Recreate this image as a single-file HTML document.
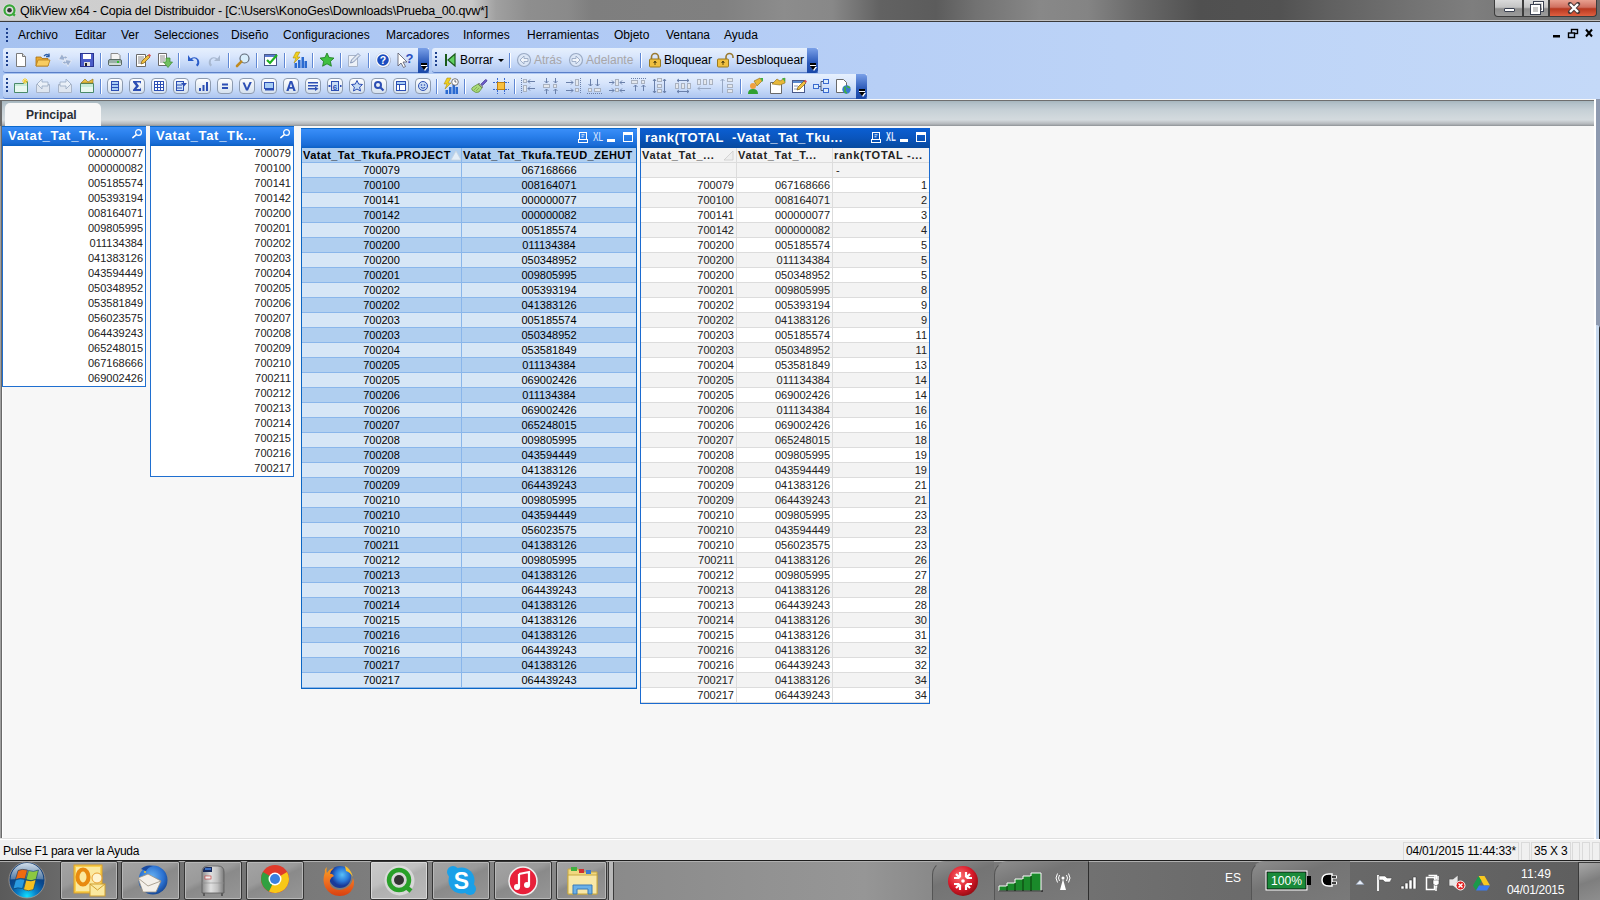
<!DOCTYPE html>
<html><head><meta charset="utf-8"><style>
*{margin:0;padding:0;box-sizing:border-box}
html,body{width:1600px;height:900px;overflow:hidden;background:#f7f7f7;font-family:"Liberation Sans",sans-serif;position:relative}
.abs{position:absolute}
#title{left:0;top:0;width:1600px;height:22px;background:linear-gradient(90deg,#d0d0d0 0%,#c8c8c8 29.5%,#a0a0a0 31%,#8e8e8e 33%,#8a8a8a 35.5%,#7e7e7e 37%,#808080 45%,#8c8c8c 49%,#888888 52%,#626262 55%,#5c5c5c 58.5%,#727272 61%,#888888 65%,#848484 68%,#6a6a6a 71%,#505050 75%,#525252 80%,#606060 83%,#727272 88%,#7e7e7e 92%,#6a6a6a 100%);border-bottom:1px solid #3a3a3a;box-shadow:inset 0 -1px 0 #c0c0c0}
#title .txt{position:absolute;left:20px;top:4px;font-size:12.5px;color:#000;white-space:nowrap;letter-spacing:-0.21px}
.wbtn{position:absolute;top:0;height:17px;border:1px solid #3c3c3c;border-top:none;background:linear-gradient(180deg,#dadada 0%,#c4c4c4 45%,#8e8e8e 55%,#9c9c9c 100%)}
.wbtn:first-of-type{border-radius:0 0 0 4px}
.wbtn.close{border-radius:0 0 4px 0;background:linear-gradient(180deg,#e8a090 0%,#d07060 45%,#b83820 55%,#e06040 100%)}
#menubar{left:0;top:22px;width:1600px;height:77px;background:linear-gradient(90deg,#a6c2f0 0%,#b2cbf5 40%,#bcd3f7 70%,#c4d9f8 100%)}
.menu{position:absolute;top:28px;font-size:12px;color:#000;white-space:nowrap;line-height:15px}
.tb{position:absolute;height:25px;border-radius:3px 0 0 3px;background:linear-gradient(180deg,#e6f0fd 0%,#d9e6fc 35%,#c6d9f8 65%,#aec6f0 100%);border-bottom:1px solid #5a7fc8}
.tb .grip{left:3px;top:4px;height:15px}
.grip{position:absolute;width:2px;height:13px;background:repeating-linear-gradient(180deg,#1c3f8c 0 2px,transparent 2px 4px)}
.ovf{position:absolute;right:0;top:0;width:11px;height:25px;background:linear-gradient(180deg,#7aa0e8,#2a58b8 60%,#1a48a8);border-radius:0 3px 3px 0}
.ovf:before{content:"";position:absolute;left:3px;top:15px;width:6px;height:2px;background:#000;box-shadow:0 1px 0 #fff}
.ovf:after{content:"";position:absolute;left:2.5px;top:18px;width:0;height:0;border-left:3.5px solid transparent;border-right:3.5px solid transparent;border-top:4px solid #000;filter:drop-shadow(1px 1px 0 #fff)}
.sep{position:absolute;width:2px;height:15px;border-left:1px solid #6088d4;border-right:1px solid #fff}
.ic{position:absolute;overflow:visible}
.tbt{position:absolute;top:53px;font-size:12px;line-height:15px;color:#000;white-space:nowrap}
.tbt.dis{color:#a8a6a8}
#tabstrip{left:0;top:100px;width:1594px;height:26px;border-left:2px solid #6a6a6a;background:linear-gradient(180deg,#6e6e6e 0px,#6e6e6e 1px,#a6b6be 1px,#b4c2ca 4px,#c6d0d6 10px,#d0d8dc 17px,#d4dade 20px,#b4b8bc 24px,#8e9296 26px)}
#rstrip{left:1594px;top:99px;width:6px;height:740px;background:linear-gradient(90deg,#fff 0 2px,#8e9ab0 2px)}
#rstrip2{left:1596px;top:325px;width:4px;height:514px;background:linear-gradient(90deg,#c6d8ee 0 3px,#2a2a2a 3px);border-top-right-radius:4px}
#tab{left:5px;top:103px;width:96px;height:23px;background:#f7f7f7;border-radius:5px 5px 0 0;font-size:12px;font-weight:bold;color:#2a2e36;line-height:25px;padding-left:21px}
#ws{left:0;top:126px;width:1595px;height:713px;background:#f7f7f7;background-image:linear-gradient(90deg,#a0a0a0 0 1px,#6a6a6a 1px 2px,#fff 2px 3px,transparent 3px);border-right:1px solid #e0e0e0;box-shadow:inset 0 -1px 0 #e0e0e0}
#status{left:0;top:839px;width:1600px;height:21px;background:#f0f0f0;border-top:1px solid #fff}
#status .txt{position:absolute;left:3px;top:4px;font-size:12px;color:#000;letter-spacing:-0.3px}
.pane{position:absolute;top:2px;height:18px;border:1px solid #dadada;border-bottom:none;font-size:12px;line-height:17px;color:#000;padding-left:2px;white-space:nowrap;letter-spacing:-0.2px}
#taskbar{left:0;top:860px;width:1600px;height:40px;background:linear-gradient(180deg,#5c5c5c 0%,#4a4a4a 50%,#3e3e3e 100%);border-top:1px solid #2a2a2a}
.lb{position:absolute;background:#fff;border:1px solid #1f6fd0;border-top:none}
.lbh{position:absolute;left:-1px;top:0;right:-1px;height:20px;background:linear-gradient(180deg,#0b68cc 0,#0b68cc 1px,#3a8ef8 1px,#2a80ec 40%,#1a6cd6 85%,#0b60c4 100%);color:#fff;font-weight:bold;font-size:13px;padding-left:6px;line-height:19px;white-space:nowrap;letter-spacing:0.7px}
.mag{position:absolute;right:3px;top:2px}
.lbi{position:absolute;right:2px;font-size:11px;color:#222;line-height:15px}
.t3{position:absolute;left:301px;top:128px;width:336px;height:561px;border:1px solid #0b66c4;background:#d6e6f6}
.t3t{position:absolute;left:-1px;top:-1px;right:-1px;height:20px;background:linear-gradient(180deg,#0b68cc 0,#0b68cc 1px,#3a8ef8 1px,#2a80ec 40%,#1a6cd6 85%,#0b60c4 100%)}
.tico{position:absolute;right:3px;top:2px}
.t3h{position:absolute;left:0;top:19px;width:334px;height:15px;background:#b0cff0;font-weight:bold;font-size:11px;color:#000;line-height:15px;border-bottom:1px solid #8ab6ea;letter-spacing:0.4px}
.sorttri{position:absolute;top:2px}
.t3r{position:absolute;left:0;width:334px;height:15px;font-size:11px;color:#000;line-height:15px;border-bottom:1px solid #8ab6ea}
.t3r.r0{background:#d6e6f6}.t3r.r1{background:#b0cff0}
.t3 .c1{position:absolute;left:0;width:160px;text-align:center;border-right:1px solid #8ab6ea;height:15px}
.t3 .c2{position:absolute;left:160px;width:174px;text-align:center;height:15px}
.t3h .c1,.t3h .c2{text-align:left;padding-left:1px;white-space:nowrap;overflow:hidden}
.t4{position:absolute;left:640px;top:128px;width:290px;height:576px;border:1px solid #1b6bd0;background:#fff}
.t4t{position:absolute;left:-1px;top:-1px;right:-1px;height:20px;background:linear-gradient(180deg,#0b5fd3 0%,#0a55bd 50%,#074a9e 100%);color:#fff;font-weight:bold;font-size:13px;padding-left:5px;line-height:19px;white-space:nowrap;letter-spacing:0.5px}
.t4h{position:absolute;left:0;top:19px;width:288px;height:15px;background:#f3f3f3;font-weight:bold;font-size:11px;color:#222;line-height:15px;border-bottom:1px solid #dcdcdc;letter-spacing:0.7px}
.t4r{position:absolute;left:0;width:288px;height:15px;font-size:11px;color:#222;line-height:15px;border-bottom:1px solid #dcdcdc}
.t4r.r0{background:#fff}.t4r.r1{background:#f3f3f3}
.t4 .c1{position:absolute;left:0;width:96px;text-align:right;padding-right:2px;border-right:1px solid #dcdcdc;height:15px}
.t4 .c2{position:absolute;left:96px;width:96px;text-align:right;padding-right:2px;border-right:1px solid #dcdcdc;height:15px}
.t4 .c3{position:absolute;left:192px;width:96px;text-align:right;padding-right:2px;height:15px}
.t4h .c1,.t4h .c2,.t4h .c3{text-align:left;padding-left:1px;white-space:nowrap}
.t4 .dash{text-align:left;padding-left:3px}
#taskbar{box-shadow:inset 0 1px 0 #b0b0b0;background:linear-gradient(90deg,#5a5a5a 0%,#6a6a6a 4%,#7a7a7a 20%,#8a8a8a 38%,#929292 48%,#969696 54%,#8a8a8a 58%,#747474 64%,#6c6c6c 75%,#686868 85%,#5e5e5e 100%);border-top:1px solid #1e1e1e}
.tbtn{position:absolute;top:0;height:39px;border:1px solid #353535;border-radius:2px;background:linear-gradient(155deg,#a4a4a4 0%,#9a9a9a 40%,#8a8a8a 50%,#969696 100%);box-shadow:inset 0 0 0 1px #b8b8b8}
.tbtn.act{background:linear-gradient(155deg,#cacaca 0%,#c0c0c0 40%,#b0b0b0 50%,#bababa 100%);box-shadow:inset 0 0 0 1px #d8d8d8}
.tray{position:absolute;top:0;height:40px;border-radius:14px 0 0 0;border-left:1px solid #555;border-top:1px solid #888;background:linear-gradient(160deg,#8e8e8e,#747474 40%,#7a7a7a)}

</style></head><body>
<svg width="0" height="0" style="position:absolute"><defs><linearGradient id="gbtn" x1="0" y1="0" x2="0" y2="1"><stop offset="0" stop-color="#ffffff"/><stop offset="1" stop-color="#d4e0ee"/></linearGradient></defs></svg>
<div id="title" class="abs"><svg style="position:absolute;left:2px;top:3px" width="15" height="15" viewBox="0 0 15 15"><circle cx="7.5" cy="7.5" r="7" fill="#e8e8e8" opacity=".6"/><circle cx="7.5" cy="7.3" r="5" fill="none" stroke="#3aa83a" stroke-width="2.2"/><circle cx="7.5" cy="7.3" r="2.3" fill="#333"/><path d="M10 10.5l3 2" stroke="#3aa83a" stroke-width="2.2"/></svg><div class="txt">QlikView x64 - Copia del Distribuidor - [C:\Users\KonoGes\Downloads\Prueba_00.qvw*]</div>
<div class="wbtn" style="left:1494px;width:29px;border-radius:0 0 0 4px"><div style="position:absolute;left:9px;top:8px;width:11px;height:4px;background:#fff;border:1px solid #3a4050;border-radius:1px"></div></div>
<div class="wbtn" style="left:1523px;width:26px"><div style="position:absolute;left:10px;top:2px;width:9px;height:9px;border:1.5px solid #fff;outline:1px solid #3a4050"></div><div style="position:absolute;left:7px;top:5px;width:9px;height:9px;background:#c8c8c8;border:2px solid #fff;outline:1px solid #3a4050"></div></div>
<div class="wbtn close" style="left:1549px;width:48px"><svg style="position:absolute;left:17px;top:2px" width="14" height="12" viewBox="0 0 14 12"><path d="M3 2l8 8M11 2L3 10" stroke="#4a3a3a" stroke-width="4.2" stroke-linecap="round"/><path d="M3 2l8 8M11 2L3 10" stroke="#fff" stroke-width="2.4"/></svg></div>
</div>
<div id="menubar" class="abs"></div>
<div class="grip" style="left:6px;top:28px;height:15px"></div>
<div class="menu" style="left:18px">Archivo</div>
<div class="menu" style="left:75px">Editar</div>
<div class="menu" style="left:121px">Ver</div>
<div class="menu" style="left:154px">Selecciones</div>
<div class="menu" style="left:231px">Diseño</div>
<div class="menu" style="left:283px">Configuraciones</div>
<div class="menu" style="left:386px">Marcadores</div>
<div class="menu" style="left:463px">Informes</div>
<div class="menu" style="left:527px">Herramientas</div>
<div class="menu" style="left:614px">Objeto</div>
<div class="menu" style="left:666px">Ventana</div>
<div class="menu" style="left:724px">Ayuda</div>
<svg style="position:absolute;left:1550px;top:28px" width="46" height="12" viewBox="0 0 46 12"><rect x="3" y="7" width="7" height="2.5" fill="#000"/><rect x="21.5" y="1.5" width="6" height="4" fill="none" stroke="#000" stroke-width="1.4"/><rect x="18.5" y="5" width="6" height="4.5" fill="#c0d6f6" stroke="#000" stroke-width="1.4"/><path d="M36 1.5l6 7M42 1.5l-6 7" stroke="#000" stroke-width="2"/></svg>
<div class="tb" style="left:3px;top:48px;width:426px"><div class="grip"></div><div class="ovf"></div></div>
<div class="tb" style="left:432px;top:48px;width:386px"><div class="grip"></div><div class="ovf"></div></div>
<div class="tb" style="left:3px;top:74px;width:864px"><div class="grip"></div><div class="ovf"></div></div>
<svg class="ic" style="left:13px;top:52px;width:16px;height:16px" width="16" height="16" viewBox="0 0 16 16" ><path d="M3.5 1.5h6l3 3v10h-9z" fill="#fff" stroke="#7a7a7a"/><path d="M9.5 1.5v3h3" fill="#ddd" stroke="#7a7a7a"/></svg><svg class="ic" style="left:35px;top:52px;width:16px;height:16px" width="16" height="16" viewBox="0 0 16 16" ><path d="M1 5h5l1 1.5h6V14H1z" fill="#e8a830" stroke="#a87010" stroke-width=".8"/><path d="M3 8h12l-2 6H1z" fill="#f8cc60" stroke="#b88020" stroke-width=".8"/><path d="M9 4q3-3 5 0" stroke="#2c5ea8" fill="none" stroke-width="1.4"/><path d="M14 1.5v3h-3" fill="none" stroke="#2c5ea8" stroke-width="1.3"/></svg><svg class="ic" style="left:57px;top:52px;width:16px;height:16px" width="16" height="16" viewBox="0 0 16 16" ><path d="M1.5 7.5L5 1.5l1.5 3Q9 3 11 5.5l-2.5 1.5Q7.5 5.5 7 7l1.5 1.5z" fill="#9cb0d0" stroke="#e8eef8" stroke-width=".8"/><path d="M14.5 8.5L11 14.5l-1.5-3Q7 13 5 10.5l2.5-1.5Q8.5 10.5 9 9L7.5 7.5z" fill="#9cb0d0" stroke="#e8eef8" stroke-width=".8"/></svg><svg class="ic" style="left:79px;top:52px;width:16px;height:16px" width="16" height="16" viewBox="0 0 16 16" ><rect x="1.5" y="1.5" width="13" height="13" fill="#4a5cc8" stroke="#2a3490"/><rect x="4" y="2" width="8" height="5" fill="#fff"/><rect x="5" y="10" width="6" height="4" fill="#e0e0e0"/><rect x="6" y="11" width="2" height="3" fill="#222"/></svg><div class="sep" style="left:100px;top:53px"></div><svg class="ic" style="left:107px;top:52px;width:16px;height:16px" width="16" height="16" viewBox="0 0 16 16" ><path d="M4 1.5h7l2 2v4H4z" fill="#f4f4f4" stroke="#8a8a8a"/><rect x="1.5" y="7.5" width="13" height="6" rx="1.5" fill="#9ab0a8" stroke="#5a6a66"/><rect x="2" y="11" width="12" height="2" fill="#d0dcd8"/><rect x="10" y="9" width="2" height="2" fill="#30c030"/></svg><div class="sep" style="left:128px;top:53px"></div><svg class="ic" style="left:135px;top:52px;width:16px;height:16px" width="16" height="16" viewBox="0 0 16 16" ><path d="M1.5 2.5h9v12h-9z" fill="#fff" stroke="#6a6a6a"/><path d="M3 5h6M3 7h6M3 9h5M3 11h4" stroke="#8a8a8a"/><path d="M6 12l1-3 6-6 2 2-6 6z" fill="#f0c040" stroke="#7a5a10" stroke-width=".7"/><path d="M13 3l1.2-1.2 1.8 1.8L14.8 5z" fill="#e05050"/></svg><svg class="ic" style="left:157px;top:52px;width:16px;height:16px" width="16" height="16" viewBox="0 0 16 16" ><path d="M1.5 1.5h8v12h-8z" fill="#fff" stroke="#6a6a6a"/><path d="M3 4h5M3 6h5M3 8h5M3 10h4" stroke="#8a8a8a"/><path d="M9 6h4v4h2.5l-4.5 5.5L6.5 10H9z" fill="#70c060" stroke="#3a8a30" stroke-width=".7"/></svg><div class="sep" style="left:178px;top:53px"></div><svg class="ic" style="left:185px;top:52px;width:16px;height:16px" width="16" height="16" viewBox="0 0 16 16" ><path d="M3 3v6h6L7 7q3-2 5 1 1 3-1 5l1.5 1.5q3-3 1-7-3-4-8-1z" fill="#2a5cc8"/></svg><svg class="ic" style="left:207px;top:52px;width:16px;height:16px" width="16" height="16" viewBox="0 0 16 16" ><path d="M13 3v6H7l2-2q-3-2-5 1-1 3 1 5l-1.5 1.5q-3-3-1-7 3-4 8-1z" fill="#a8b8d0"/></svg><div class="sep" style="left:228px;top:53px"></div><svg class="ic" style="left:235px;top:52px;width:16px;height:16px" width="16" height="16" viewBox="0 0 16 16" ><circle cx="9.5" cy="6.5" r="4.5" fill="#d8eefc" stroke="#606a78" stroke-width="1.2"/><path d="M6.3 9.7L2 14" stroke="#c08a20" stroke-width="2.6" stroke-linecap="round"/></svg><div class="sep" style="left:256px;top:53px"></div><svg class="ic" style="left:263px;top:52px;width:16px;height:16px" width="16" height="16" viewBox="0 0 16 16" ><rect x="1.5" y="2.5" width="12" height="11" fill="#fff" stroke="#4a5a8a"/><rect x="2" y="3" width="11" height="2" fill="#5a7ad0"/><path d="M4 8l3 3 7-8" stroke="#20b020" stroke-width="2.2" fill="none"/></svg><div class="sep" style="left:284px;top:53px"></div><svg class="ic" style="left:291px;top:52px;width:16px;height:16px" width="16" height="16" viewBox="0 0 16 16" ><path d="M5 0h4L6 5h3l-6 6 2-5H2z" fill="#f0d020" stroke="#a08000" stroke-width=".5"/><path d="M7 8h2.5v8H7zM10.5 5H13v11h-2.5zM3.5 11H6v5H3.5zM13.5 9H16v7h-2.5z" fill="#2a6ad0"/></svg><div class="sep" style="left:312px;top:53px"></div><svg class="ic" style="left:319px;top:52px;width:16px;height:16px" width="16" height="16" viewBox="0 0 16 16" ><path d="M8 1l2.1 4.5 4.9.6-3.6 3.3 1 4.8L8 11.8l-4.4 2.4 1-4.8L1 6.1l4.9-.6z" fill="#40c040" stroke="#1a7a1a" stroke-width=".8"/></svg><div class="sep" style="left:340px;top:53px"></div><svg class="ic" style="left:347px;top:52px;width:16px;height:16px" width="16" height="16" viewBox="0 0 16 16" ><path d="M1.5 3.5h9v11h-9z" fill="#eef2f8" stroke="#a8b4c8"/><path d="M3.5 11l1-3 6.5-6.5 2 2-6.5 6.5z" fill="#dfe6f0" stroke="#7a8cb0" stroke-width=".9"/></svg><div class="sep" style="left:368px;top:53px"></div><svg class="ic" style="left:375px;top:52px;width:16px;height:16px" width="16" height="16" viewBox="0 0 16 16" ><circle cx="8.5" cy="8.5" r="7.2" fill="#4a4a5a" opacity=".5"/><circle cx="8" cy="8" r="7.3" fill="#fff" stroke="#b8c0d0" stroke-width=".5"/><circle cx="8" cy="8" r="5.8" fill="#1a4cc0"/><text x="8" y="12" font-size="10.5" font-family="Liberation Sans" font-weight="bold" text-anchor="middle" fill="#fff">?</text></svg><svg class="ic" style="left:397px;top:52px;width:16px;height:16px" width="16" height="16" viewBox="0 0 16 16" ><path d="M1 1v13l3-3 2.5 4.5 2-1L6 10h4z" fill="#fff" stroke="#556" stroke-width=".8"/><text x="12.5" y="10.5" font-size="13" font-family="Liberation Sans" font-weight="bold" text-anchor="middle" fill="#2a50c0">?</text></svg><svg class="ic" style="left:13px;top:78px;width:16px;height:16px" width="16" height="16" viewBox="0 0 16 16" ><path d="M1.5 5.5h9l1-2h3v11h-13z" fill="#c8ecd8" stroke="#4a8a6a"/><rect x="2" y="8" width="12" height="6" fill="#e8f8f0"/><path d="M12 0v6M9 3h6M10 1l4 4M14 1l-4 4" stroke="#f8d030" stroke-width="1"/></svg><svg class="ic" style="left:35px;top:78px;width:16px;height:16px" width="16" height="16" viewBox="0 0 16 16" ><path d="M1.5 6.5h13v8h-13z" fill="#dfe6f0" stroke="#a8b4c8"/><path d="M2 6l5-5v3h6v4H7v3z" fill="#eaf0f8" stroke="#98a8c0" stroke-width=".8"/></svg><svg class="ic" style="left:57px;top:78px;width:16px;height:16px" width="16" height="16" viewBox="0 0 16 16" ><path d="M1.5 6.5h13v8h-13z" fill="#dfe6f0" stroke="#a8b4c8"/><path d="M14 6l-5-5v3H3v4h6v3z" fill="#eaf0f8" stroke="#98a8c0" stroke-width=".8"/></svg><svg class="ic" style="left:79px;top:78px;width:16px;height:16px" width="16" height="16" viewBox="0 0 16 16" ><path d="M1.5 5.5h13v9h-13z" fill="#c8ecd8" stroke="#4a8a6a"/><rect x="2" y="9" width="12" height="5" fill="#e8f8f0"/><path d="M2 5l4-4 3 3 5-3v4z" fill="#e8c040" stroke="#8a6a10" stroke-width=".6"/></svg><div class="sep" style="left:100px;top:79px"></div><svg class="ic" style="left:107px;top:78px;width:16px;height:16px" width="16" height="16" viewBox="0 0 16 16" ><rect x="0.5" y="0.5" width="15" height="15" rx="3.5" fill="url(#gbtn)" stroke="#8d9bb0"/><rect x="4.5" y="3.5" width="7" height="9" fill="#a8cdf4" stroke="#2d4fb4"/><path d="M5 6.5h6M5 9.5h6" stroke="#2d4fb4"/></svg><svg class="ic" style="left:129px;top:78px;width:16px;height:16px" width="16" height="16" viewBox="0 0 16 16" ><rect x="0.5" y="0.5" width="15" height="15" rx="3.5" fill="url(#gbtn)" stroke="#8d9bb0"/><path d="M4 3h8v3l-1-1.5H7.5L10 8l-2.5 3H11l1-1.5V13H4v-1.2L7 8 4 4.2z" fill="#2d4fb4"/></svg><svg class="ic" style="left:151px;top:78px;width:16px;height:16px" width="16" height="16" viewBox="0 0 16 16" ><rect x="0.5" y="0.5" width="15" height="15" rx="3.5" fill="url(#gbtn)" stroke="#8d9bb0"/><rect x="3.5" y="3.5" width="9" height="9" fill="#fff" stroke="#2d4fb4"/><path d="M6.5 3.5v9M9.5 3.5v9M3.5 6.5h9M3.5 9.5h9" stroke="#2d4fb4"/></svg><svg class="ic" style="left:173px;top:78px;width:16px;height:16px" width="16" height="16" viewBox="0 0 16 16" ><rect x="0.5" y="0.5" width="15" height="15" rx="3.5" fill="url(#gbtn)" stroke="#8d9bb0"/><rect x="3.5" y="3.5" width="7" height="9" fill="#cfe2f8" stroke="#2d4fb4"/><path d="M4 7h5M4 10h5" stroke="#2d4fb4"/><path d="M8 5h6l-3 3.5z" fill="#2d4fb4"/></svg><svg class="ic" style="left:195px;top:78px;width:16px;height:16px" width="16" height="16" viewBox="0 0 16 16" ><rect x="0.5" y="0.5" width="15" height="15" rx="3.5" fill="url(#gbtn)" stroke="#8d9bb0"/><path d="M4 10h2v3H4zM7.5 7h2v6h-2zM11 4h2v9h-2z" fill="#2d4fb4"/></svg><svg class="ic" style="left:217px;top:78px;width:16px;height:16px" width="16" height="16" viewBox="0 0 16 16" ><rect x="0.5" y="0.5" width="15" height="15" rx="3.5" fill="url(#gbtn)" stroke="#8d9bb0"/><path d="M5 5.5h6v2H5zM5 9h6v2H5z" fill="#2d4fb4"/></svg><svg class="ic" style="left:239px;top:78px;width:16px;height:16px" width="16" height="16" viewBox="0 0 16 16" ><rect x="0.5" y="0.5" width="15" height="15" rx="3.5" fill="url(#gbtn)" stroke="#8d9bb0"/><path d="M3.5 4.5L7 12.5h2l3.8-8.5h-2.2L8 10 5.7 4.5z" fill="#2d4fb4"/></svg><svg class="ic" style="left:261px;top:78px;width:16px;height:16px" width="16" height="16" viewBox="0 0 16 16" ><rect x="0.5" y="0.5" width="15" height="15" rx="3.5" fill="url(#gbtn)" stroke="#8d9bb0"/><rect x="3.5" y="4.5" width="9" height="6" fill="#a8cdf4" stroke="#2d4fb4"/><path d="M4 11.5h9" stroke="#2d4fb4" stroke-width="2"/></svg><svg class="ic" style="left:283px;top:78px;width:16px;height:16px" width="16" height="16" viewBox="0 0 16 16" ><rect x="0.5" y="0.5" width="15" height="15" rx="3.5" fill="url(#gbtn)" stroke="#8d9bb0"/><path d="M6.8 3h2.4l3.5 10h-2.3l-.7-2.2H6.3L5.6 13H3.3zM6.8 9h2.4L8 5.2z" fill="#2d4fb4"/></svg><svg class="ic" style="left:305px;top:78px;width:16px;height:16px" width="16" height="16" viewBox="0 0 16 16" ><rect x="0.5" y="0.5" width="15" height="15" rx="3.5" fill="url(#gbtn)" stroke="#8d9bb0"/><path d="M3 4h10v1.6H3zM3 7h10v1.6H3zM3 10h7v1.6H3z" fill="#2d4fb4"/><path d="M10 8.5l3.5 2.3L10 13z" fill="#2d4fb4"/></svg><svg class="ic" style="left:327px;top:78px;width:16px;height:16px" width="16" height="16" viewBox="0 0 16 16" ><rect x="0.5" y="0.5" width="15" height="15" rx="3.5" fill="url(#gbtn)" stroke="#8d9bb0"/><rect x="4.5" y="3.5" width="7" height="9" fill="#c8dcf4" stroke="#2d4fb4"/><path d="M3.5 8l-2 0M14.5 8l-1.5 0" stroke="#2d4fb4" stroke-width="2"/><text x="8" y="11.5" font-size="8" font-family="Liberation Sans" text-anchor="middle" fill="#2d4fb4" font-weight="bold">6</text></svg><svg class="ic" style="left:349px;top:78px;width:16px;height:16px" width="16" height="16" viewBox="0 0 16 16" ><rect x="0.5" y="0.5" width="15" height="15" rx="3.5" fill="url(#gbtn)" stroke="#8d9bb0"/><path d="M8 2.5l1.7 3.6 3.8.4-2.9 2.6.9 3.9L8 11l-3.5 2 .9-3.9-2.9-2.6 3.8-.4z" fill="#c6dbf5" stroke="#2d4fb4" stroke-width="1"/></svg><svg class="ic" style="left:371px;top:78px;width:16px;height:16px" width="16" height="16" viewBox="0 0 16 16" ><rect x="0.5" y="0.5" width="15" height="15" rx="3.5" fill="url(#gbtn)" stroke="#8d9bb0"/><circle cx="7" cy="7" r="3" fill="none" stroke="#2d4fb4" stroke-width="2"/><path d="M9 9l3.5 3.5" stroke="#2d4fb4" stroke-width="2.2"/></svg><svg class="ic" style="left:393px;top:78px;width:16px;height:16px" width="16" height="16" viewBox="0 0 16 16" ><rect x="0.5" y="0.5" width="15" height="15" rx="3.5" fill="url(#gbtn)" stroke="#8d9bb0"/><rect x="3.5" y="3.5" width="9" height="9" fill="#fff" stroke="#2d4fb4"/><path d="M3.5 6.5h9M6.5 6.5v6" stroke="#2d4fb4"/><rect x="4" y="4" width="8" height="2" fill="#a8cdf4"/></svg><svg class="ic" style="left:415px;top:78px;width:16px;height:16px" width="16" height="16" viewBox="0 0 16 16" ><rect x="0.5" y="0.5" width="15" height="15" rx="3.5" fill="url(#gbtn)" stroke="#8d9bb0"/><circle cx="8" cy="8" r="4.5" fill="#c8dcf4" stroke="#2d4fb4"/><circle cx="6.5" cy="7" r=".8" fill="#2d4fb4"/><circle cx="9.5" cy="7" r=".8" fill="#2d4fb4"/><path d="M5.8 9.3q2.2 2 4.4 0" stroke="#2d4fb4" fill="none"/></svg><div class="sep" style="left:436px;top:79px"></div><svg class="ic" style="left:443px;top:78px;width:16px;height:16px" width="16" height="16" viewBox="0 0 16 16" ><path d="M4 0h4L5 5h3l-6 6 2-5H1z" fill="#f0d020" stroke="#a08000" stroke-width=".5"/><path d="M6 9h2.5v7H6zM9.5 7H12v9H9.5zM2.5 12H5v4H2.5zM12.5 9H15v7h-2.5z" fill="#2a6ad0"/><circle cx="12" cy="4" r="3.3" fill="#fff" stroke="#555" stroke-width=".8"/><path d="M12 2v2h1.5" stroke="#333" stroke-width=".7" fill="none"/></svg><div class="sep" style="left:464px;top:79px"></div><svg class="ic" style="left:471px;top:78px;width:16px;height:16px" width="16" height="16" viewBox="0 0 16 16" ><path d="M10 6l4.5-4.5q1.5 0 1.5 1.5L11.5 7.5z" fill="#6a5ac8" stroke="#3a2a88" stroke-width=".6"/><path d="M8 5l4 4-1 1-4-4z" fill="#a0a0a0" stroke="#606060" stroke-width=".5"/><path d="M7 6l4 4-3 4q-3 2-7-2-1-2 1-3z" fill="#a8d878" stroke="#5a8a30" stroke-width=".7"/><path d="M3 12l3-3M5 13l3-3" stroke="#78a848" stroke-width=".7"/></svg><svg class="ic" style="left:493px;top:78px;width:16px;height:16px" width="16" height="16" viewBox="0 0 16 16" ><path d="M4.5 0v16M11.5 0v16M0 4.5h16M0 11.5h16" stroke="#3a6ad0" stroke-width="1" stroke-dasharray="2 1"/><rect x="4.5" y="4.5" width="7" height="7" fill="#f8c040" stroke="#c08010"/></svg><div class="sep" style="left:514px;top:79px"></div><svg class="ic" style="left:521px;top:78px;width:16px;height:16px" width="16" height="16" viewBox="0 0 16 16" ><g stroke-width="1"><path d="M0.5 0v16" stroke="#6a80aa" stroke-dasharray="1 1"/><rect x="2.5" y="1.5" width="3" height="3" fill="#e4e8ee" stroke="#aab2c0"/><rect x="2.5" y="7.5" width="3" height="6" fill="#e4e8ee" stroke="#aab2c0"/><path d="M14 3.5H7M9 1.5L7 3.5l2 2" stroke="#6a80aa" fill="none"/><path d="M14 10.5H7M9 8.5L7 10.5l2 2" stroke="#6a80aa" fill="none"/></g></svg><svg class="ic" style="left:543px;top:78px;width:16px;height:16px" width="16" height="16" viewBox="0 0 16 16" ><g stroke-width="1"><rect x="0.5" y="6.5" width="6" height="3" fill="#e4e8ee" stroke="#aab2c0"/><rect x="10.5" y="6.5" width="3" height="3" fill="#e4e8ee" stroke="#aab2c0"/><path d="M3.5 0V5M1.5 3L3.5 5l2 -2" stroke="#6a80aa" fill="none"/><path d="M12.5 0V5M10.5 3L12.5 5l2 -2" stroke="#6a80aa" fill="none"/><path d="M3.5 16V11M1.5 13L3.5 11l2 2" stroke="#6a80aa" fill="none"/><path d="M12.5 16V11M10.5 13L12.5 11l2 2" stroke="#6a80aa" fill="none"/></g></svg><svg class="ic" style="left:565px;top:78px;width:16px;height:16px" width="16" height="16" viewBox="0 0 16 16" ><g stroke-width="1"><path d="M15.5 0v16" stroke="#6a80aa" stroke-dasharray="1 1"/><rect x="10.5" y="1.5" width="3" height="6" fill="#e4e8ee" stroke="#aab2c0"/><rect x="10.5" y="10.5" width="3" height="3" fill="#e4e8ee" stroke="#aab2c0"/><path d="M1 4.5H8M6 2.5L8 4.5l-2 2" stroke="#6a80aa" fill="none"/><path d="M1 12.5H8M6 10.5L8 12.5l-2 2" stroke="#6a80aa" fill="none"/></g></svg><svg class="ic" style="left:587px;top:78px;width:16px;height:16px" width="16" height="16" viewBox="0 0 16 16" ><g stroke-width="1"><path d="M0 15.5h16" stroke="#6a80aa" stroke-dasharray="1 1"/><rect x="1.5" y="10.5" width="3" height="3" fill="#e4e8ee" stroke="#aab2c0"/><rect x="7.5" y="10.5" width="6" height="3" fill="#e4e8ee" stroke="#aab2c0"/><path d="M3.5 1V8M1.5 6L3.5 8l2 -2" stroke="#6a80aa" fill="none"/><path d="M10.5 1V8M8.5 6L10.5 8l2 -2" stroke="#6a80aa" fill="none"/></g></svg><svg class="ic" style="left:609px;top:78px;width:16px;height:16px" width="16" height="16" viewBox="0 0 16 16" ><g stroke-width="1"><rect x="6.5" y="1.5" width="3" height="6" fill="#e4e8ee" stroke="#aab2c0"/><rect x="6.5" y="10.5" width="3" height="3" fill="#e4e8ee" stroke="#aab2c0"/><path d="M0 4.5H5M3 2.5L5 4.5l-2 2" stroke="#6a80aa" fill="none"/><path d="M16 4.5H11M13 2.5L11 4.5l2 2" stroke="#6a80aa" fill="none"/><path d="M0 12.5H5M3 10.5L5 12.5l-2 2" stroke="#6a80aa" fill="none"/><path d="M16 12.5H11M13 10.5L11 12.5l2 2" stroke="#6a80aa" fill="none"/></g></svg><svg class="ic" style="left:631px;top:78px;width:16px;height:16px" width="16" height="16" viewBox="0 0 16 16" ><g stroke-width="1"><path d="M0 0.5h16" stroke="#6a80aa" stroke-dasharray="1 1"/><rect x="0.5" y="2.5" width="6" height="3" fill="#e4e8ee" stroke="#aab2c0"/><rect x="10.5" y="2.5" width="3" height="3" fill="#e4e8ee" stroke="#aab2c0"/><path d="M4.5 13V7M2.5 9L4.5 7l2 2" stroke="#6a80aa" fill="none"/><path d="M12.5 13V7M10.5 9L12.5 7l2 2" stroke="#6a80aa" fill="none"/></g></svg><svg class="ic" style="left:653px;top:78px;width:16px;height:16px" width="16" height="16" viewBox="0 0 16 16" ><g stroke-width="1"><rect x="4.5" y="0.5" width="4" height="3" fill="#e4e8ee" stroke="#aab2c0"/><rect x="4.5" y="6.5" width="4" height="3" fill="#e4e8ee" stroke="#aab2c0"/><rect x="4.5" y="11.5" width="4" height="3" fill="#e4e8ee" stroke="#aab2c0"/><path d="M1.5 1v14M0 3l1.5-2 1.5 2M0 13l1.5 2 1.5-2M11.5 1v14M10 3l1.5-2 1.5 2M10 13l1.5 2 1.5-2" stroke="#6a80aa" fill="none"/></g></svg><svg class="ic" style="left:675px;top:78px;width:16px;height:16px" width="16" height="16" viewBox="0 0 16 16" ><g stroke-width="1"><rect x="0.5" y="5.5" width="3" height="5" fill="#e4e8ee" stroke="#aab2c0"/><rect x="6.5" y="5.5" width="3" height="5" fill="#e4e8ee" stroke="#aab2c0"/><rect x="12.5" y="5.5" width="3" height="5" fill="#e4e8ee" stroke="#aab2c0"/><path d="M2 2.5h12M4 1l-2 1.5 2 1.5M12 1l2 1.5-2 1.5M2 13.5h12M4 12l-2 1.5 2 1.5M12 12l2 1.5-2 1.5" stroke="#6a80aa" fill="none"/></g></svg><svg class="ic" style="left:697px;top:78px;width:16px;height:16px" width="16" height="16" viewBox="0 0 16 16" ><g stroke-width="1"><rect x="0.5" y="1.5" width="3" height="5" fill="#e4e8ee" stroke="#aab2c0"/><rect x="6.5" y="1.5" width="3" height="5" fill="#e4e8ee" stroke="#aab2c0"/><rect x="12.5" y="1.5" width="3" height="5" fill="#e4e8ee" stroke="#aab2c0"/><path d="M14 10.5H1M3 8.5L1 10.5l2 2" stroke="#98a8c4" fill="none"/></g></svg><svg class="ic" style="left:719px;top:78px;width:16px;height:16px" width="16" height="16" viewBox="0 0 16 16" ><g stroke-width="1"><rect x="8.5" y="0.5" width="5" height="3" fill="#e4e8ee" stroke="#aab2c0"/><rect x="8.5" y="6.5" width="5" height="3" fill="#e4e8ee" stroke="#aab2c0"/><rect x="8.5" y="11.5" width="5" height="3" fill="#e4e8ee" stroke="#aab2c0"/><path d="M3.5 15V1M1.5 3L3.5 1l2 2" stroke="#98a8c4" fill="none"/></g></svg><div class="sep" style="left:740px;top:79px"></div><svg class="ic" style="left:747px;top:78px;width:16px;height:16px" width="16" height="16" viewBox="0 0 16 16" ><path d="M7 3l6-3 2 3-5 5z" fill="#e8b838" stroke="#8a6a10" stroke-width=".6"/><path d="M13 0h3v4z" fill="#40b040"/><circle cx="6" cy="8" r="3" fill="#f0a040"/><path d="M1 16q0-5 5-5t5 5z" fill="#30a030"/></svg><svg class="ic" style="left:769px;top:78px;width:16px;height:16px" width="16" height="16" viewBox="0 0 16 16" ><path d="M1.5 4.5h9l2 2v9h-11z" fill="#fff" stroke="#6a6a6a"/><path d="M3 6l5-5 3 2 5-3v5l-5 2z" fill="#e8b838" stroke="#8a6a10" stroke-width=".6"/><path d="M13 0h3v4z" fill="#40b040"/></svg><svg class="ic" style="left:791px;top:78px;width:16px;height:16px" width="16" height="16" viewBox="0 0 16 16" ><rect x="1.5" y="2.5" width="12" height="12" fill="#fff" stroke="#4a5a8a"/><rect x="2" y="3" width="11" height="2" fill="#5a8ad0"/><path d="M3 8h4M3 11h6" stroke="#8a9ab8"/><path d="M6 12l1-3 6-6 2 2-6 6z" fill="#f0c040" stroke="#7a5a10" stroke-width=".7"/><path d="M13 3l1.2-1.2 1.8 1.8L14.8 5z" fill="#e05050"/></svg><svg class="ic" style="left:813px;top:78px;width:16px;height:16px" width="16" height="16" viewBox="0 0 16 16" ><rect x="0.5" y="6.5" width="5" height="4" fill="#dcecfc" stroke="#3a6ad0"/><rect x="10.5" y="1.5" width="5" height="4" fill="#dcecfc" stroke="#3a6ad0"/><rect x="10.5" y="10.5" width="5" height="4" fill="#dcecfc" stroke="#3a6ad0"/><path d="M6 8.5h2M8 3.5v9M8 3.5h2M8 12.5h2" stroke="#4a5a7a"/></svg><svg class="ic" style="left:835px;top:78px;width:16px;height:16px" width="16" height="16" viewBox="0 0 16 16" ><path d="M1.5 1.5h7l3 3v10h-10z" fill="#fff" stroke="#6a6a6a"/><circle cx="11.5" cy="11.5" r="4.2" fill="#3a7ad0"/><path d="M9 9q2 1 1 3t2 3M12 8q2 2 3 1" stroke="#40b040" stroke-width="1.6" fill="none"/></svg>
<svg class="ic" style="left:443px;top:52px" width="14" height="16" viewBox="0 0 14 16"><path d="M3 2v12" stroke="#1a5a1a" stroke-width="2"/><path d="M12 2L5 8l7 6z" fill="#60d060" stroke="#1a5a1a" stroke-width="1.2"/></svg>
<div class="tbt" style="left:460px">Borrar</div>
<div style="position:absolute;left:498px;top:59px;width:0;height:0;border-left:3px solid transparent;border-right:3px solid transparent;border-top:3px solid #000"></div>
<div class="sep" style="left:509px;top:53px"></div>
<svg class="ic" style="left:516px;top:52px" width="16" height="16" viewBox="0 0 16 16"><circle cx="8" cy="8" r="6.5" fill="#dbe6f6" stroke="#9aaac4" stroke-width="1.2"/><path d="M4 8l4-4v2.5h4v3H8V12z" fill="#f0f4fa" stroke="#9aaac4" stroke-width=".9"/></svg>
<div class="tbt dis" style="left:534px">Atrás</div>
<svg class="ic" style="left:568px;top:52px" width="16" height="16" viewBox="0 0 16 16"><circle cx="8" cy="8" r="6.5" fill="#dbe6f6" stroke="#9aaac4" stroke-width="1.2"/><path d="M12 8L8 4v2.5H4v3h4V12z" fill="#f0f4fa" stroke="#9aaac4" stroke-width=".9"/></svg>
<div class="tbt dis" style="left:586px">Adelante</div>
<div class="sep" style="left:640px;top:53px"></div>
<svg class="ic" style="left:648px;top:52px" width="14" height="16" viewBox="0 0 14 16"><path d="M3.5 7V5a3.5 3.5 0 0 1 7 0v2" fill="none" stroke="#9a7a30" stroke-width="1.6"/><rect x="1.5" y="7" width="11" height="8" rx="1" fill="#f0c040" stroke="#9a7a20"/><path d="M7 9v4M5.5 10.5L7 9l1.5 1.5" stroke="#5a4a10" stroke-width="1"/></svg>
<div class="tbt" style="left:664px">Bloquear</div>
<svg class="ic" style="left:717px;top:52px" width="17" height="16" viewBox="0 0 17 16"><path d="M9 7V5a3.5 3.5 0 0 1 7 0v1" fill="none" stroke="#9a7a30" stroke-width="1.6"/><rect x="0.5" y="7" width="11" height="8" rx="1" fill="#f0c040" stroke="#9a7a20"/><path d="M6 9v4M4.5 10.5L6 9l1.5 1.5" stroke="#5a4a10" stroke-width="1"/></svg>
<div class="tbt" style="left:736px">Desbloquear</div>
<div id="tabstrip" class="abs"></div>
<div id="tab" class="abs">Principal</div>
<div id="ws" class="abs"></div>
<div id="rstrip" class="abs"></div><div id="rstrip2" class="abs"></div>
<div class="lb" style="left:2px;top:126px;width:144px;height:261px"><div class="lbh">Vatat_Tat_Tk...<svg class="mag" width="12" height="12" viewBox="0 0 12 12"><circle cx="7.5" cy="4.5" r="2.9" fill="none" stroke="#fff" stroke-width="1.2"/><path d="M5.4 6.6L1.8 9.6" stroke="#fff" stroke-width="1.5" stroke-linecap="round"/></svg></div><div class="lbi" style="top:20px">000000077</div><div class="lbi" style="top:35px">000000082</div><div class="lbi" style="top:50px">005185574</div><div class="lbi" style="top:65px">005393194</div><div class="lbi" style="top:80px">008164071</div><div class="lbi" style="top:95px">009805995</div><div class="lbi" style="top:110px">011134384</div><div class="lbi" style="top:125px">041383126</div><div class="lbi" style="top:140px">043594449</div><div class="lbi" style="top:155px">050348952</div><div class="lbi" style="top:170px">053581849</div><div class="lbi" style="top:185px">056023575</div><div class="lbi" style="top:200px">064439243</div><div class="lbi" style="top:215px">065248015</div><div class="lbi" style="top:230px">067168666</div><div class="lbi" style="top:245px">069002426</div></div><div class="lb" style="left:150px;top:126px;width:144px;height:351px"><div class="lbh">Vatat_Tat_Tk...<svg class="mag" width="12" height="12" viewBox="0 0 12 12"><circle cx="7.5" cy="4.5" r="2.9" fill="none" stroke="#fff" stroke-width="1.2"/><path d="M5.4 6.6L1.8 9.6" stroke="#fff" stroke-width="1.5" stroke-linecap="round"/></svg></div><div class="lbi" style="top:20px">700079</div><div class="lbi" style="top:35px">700100</div><div class="lbi" style="top:50px">700141</div><div class="lbi" style="top:65px">700142</div><div class="lbi" style="top:80px">700200</div><div class="lbi" style="top:95px">700201</div><div class="lbi" style="top:110px">700202</div><div class="lbi" style="top:125px">700203</div><div class="lbi" style="top:140px">700204</div><div class="lbi" style="top:155px">700205</div><div class="lbi" style="top:170px">700206</div><div class="lbi" style="top:185px">700207</div><div class="lbi" style="top:200px">700208</div><div class="lbi" style="top:215px">700209</div><div class="lbi" style="top:230px">700210</div><div class="lbi" style="top:245px">700211</div><div class="lbi" style="top:260px">700212</div><div class="lbi" style="top:275px">700213</div><div class="lbi" style="top:290px">700214</div><div class="lbi" style="top:305px">700215</div><div class="lbi" style="top:320px">700216</div><div class="lbi" style="top:335px">700217</div></div><div class="t3"><div class="t3t"><svg class="tico" width="56" height="14" viewBox="0 0 56 14"><rect x="1.5" y="2.5" width="7" height="7" fill="none" stroke="#fff" stroke-width="1"/><path d="M3.5 4.8h3M3.5 6.8h2" stroke="#fff" stroke-width=".9"/><rect x="0.5" y="9.5" width="9" height="3" fill="none" stroke="#fff" stroke-width="1"/><text x="15" y="11.3" font-family="Liberation Sans" font-size="13.6" fill="#e0ecff" textLength="10" lengthAdjust="spacingAndGlyphs">XL</text><rect x="29" y="9" width="8" height="3" fill="#fff"/><rect x="45.5" y="2.5" width="9" height="9" fill="none" stroke="#fff" stroke-width="1"/><rect x="45" y="2" width="10" height="3" fill="#fff"/></svg></div><div class="t3h"><span class="c1">Vatat_Tat_Tkufa.PROJECT</span><span class="c2">Vatat_Tat_Tkufa.TEUD_ZEHUT</span><svg class="sorttri" style="left:148px" width="12" height="11" viewBox="0 0 12 11"><path d="M6 1L11 10H1z" fill="#e4eef8" stroke="#c8d4e0" stroke-width=".8"/></svg></div><div class="t3r r0" style="top:34px"><span class="c1">700079</span><span class="c2">067168666</span></div><div class="t3r r1" style="top:49px"><span class="c1">700100</span><span class="c2">008164071</span></div><div class="t3r r0" style="top:64px"><span class="c1">700141</span><span class="c2">000000077</span></div><div class="t3r r1" style="top:79px"><span class="c1">700142</span><span class="c2">000000082</span></div><div class="t3r r0" style="top:94px"><span class="c1">700200</span><span class="c2">005185574</span></div><div class="t3r r1" style="top:109px"><span class="c1">700200</span><span class="c2">011134384</span></div><div class="t3r r0" style="top:124px"><span class="c1">700200</span><span class="c2">050348952</span></div><div class="t3r r1" style="top:139px"><span class="c1">700201</span><span class="c2">009805995</span></div><div class="t3r r0" style="top:154px"><span class="c1">700202</span><span class="c2">005393194</span></div><div class="t3r r1" style="top:169px"><span class="c1">700202</span><span class="c2">041383126</span></div><div class="t3r r0" style="top:184px"><span class="c1">700203</span><span class="c2">005185574</span></div><div class="t3r r1" style="top:199px"><span class="c1">700203</span><span class="c2">050348952</span></div><div class="t3r r0" style="top:214px"><span class="c1">700204</span><span class="c2">053581849</span></div><div class="t3r r1" style="top:229px"><span class="c1">700205</span><span class="c2">011134384</span></div><div class="t3r r0" style="top:244px"><span class="c1">700205</span><span class="c2">069002426</span></div><div class="t3r r1" style="top:259px"><span class="c1">700206</span><span class="c2">011134384</span></div><div class="t3r r0" style="top:274px"><span class="c1">700206</span><span class="c2">069002426</span></div><div class="t3r r1" style="top:289px"><span class="c1">700207</span><span class="c2">065248015</span></div><div class="t3r r0" style="top:304px"><span class="c1">700208</span><span class="c2">009805995</span></div><div class="t3r r1" style="top:319px"><span class="c1">700208</span><span class="c2">043594449</span></div><div class="t3r r0" style="top:334px"><span class="c1">700209</span><span class="c2">041383126</span></div><div class="t3r r1" style="top:349px"><span class="c1">700209</span><span class="c2">064439243</span></div><div class="t3r r0" style="top:364px"><span class="c1">700210</span><span class="c2">009805995</span></div><div class="t3r r1" style="top:379px"><span class="c1">700210</span><span class="c2">043594449</span></div><div class="t3r r0" style="top:394px"><span class="c1">700210</span><span class="c2">056023575</span></div><div class="t3r r1" style="top:409px"><span class="c1">700211</span><span class="c2">041383126</span></div><div class="t3r r0" style="top:424px"><span class="c1">700212</span><span class="c2">009805995</span></div><div class="t3r r1" style="top:439px"><span class="c1">700213</span><span class="c2">041383126</span></div><div class="t3r r0" style="top:454px"><span class="c1">700213</span><span class="c2">064439243</span></div><div class="t3r r1" style="top:469px"><span class="c1">700214</span><span class="c2">041383126</span></div><div class="t3r r0" style="top:484px"><span class="c1">700215</span><span class="c2">041383126</span></div><div class="t3r r1" style="top:499px"><span class="c1">700216</span><span class="c2">041383126</span></div><div class="t3r r0" style="top:514px"><span class="c1">700216</span><span class="c2">064439243</span></div><div class="t3r r1" style="top:529px"><span class="c1">700217</span><span class="c2">041383126</span></div><div class="t3r r0" style="top:544px"><span class="c1">700217</span><span class="c2">064439243</span></div></div><div class="t4"><div class="t4t">rank(TOTAL &nbsp;-Vatat_Tat_Tku...<svg class="tico" width="56" height="14" viewBox="0 0 56 14"><rect x="1.5" y="2.5" width="7" height="7" fill="none" stroke="#fff" stroke-width="1"/><path d="M3.5 4.8h3M3.5 6.8h2" stroke="#fff" stroke-width=".9"/><rect x="0.5" y="9.5" width="9" height="3" fill="none" stroke="#fff" stroke-width="1"/><text x="15" y="11.3" font-family="Liberation Sans" font-size="13.6" fill="#e0ecff" textLength="10" lengthAdjust="spacingAndGlyphs">XL</text><rect x="29" y="9" width="8" height="3" fill="#fff"/><rect x="45.5" y="2.5" width="9" height="9" fill="none" stroke="#fff" stroke-width="1"/><rect x="45" y="2" width="10" height="3" fill="#fff"/></svg></div><div class="t4h"><span class="c1">Vatat_Tat_...</span><span class="c2">Vatat_Tat_T...</span><span class="c3">rank(TOTAL -...</span><svg class="sorttri" style="left:82px" width="12" height="11" viewBox="0 0 12 11"><path d="M10 1L10 10H1z" fill="#eee" stroke="#ccc" stroke-width=".8"/></svg></div><div class="t4r r1" style="top:34px"><span class="c1"></span><span class="c2"></span><span class="c3 dash">-</span></div><div class="t4r r0" style="top:49px"><span class="c1">700079</span><span class="c2">067168666</span><span class="c3">1</span></div><div class="t4r r1" style="top:64px"><span class="c1">700100</span><span class="c2">008164071</span><span class="c3">2</span></div><div class="t4r r0" style="top:79px"><span class="c1">700141</span><span class="c2">000000077</span><span class="c3">3</span></div><div class="t4r r1" style="top:94px"><span class="c1">700142</span><span class="c2">000000082</span><span class="c3">4</span></div><div class="t4r r0" style="top:109px"><span class="c1">700200</span><span class="c2">005185574</span><span class="c3">5</span></div><div class="t4r r1" style="top:124px"><span class="c1">700200</span><span class="c2">011134384</span><span class="c3">5</span></div><div class="t4r r0" style="top:139px"><span class="c1">700200</span><span class="c2">050348952</span><span class="c3">5</span></div><div class="t4r r1" style="top:154px"><span class="c1">700201</span><span class="c2">009805995</span><span class="c3">8</span></div><div class="t4r r0" style="top:169px"><span class="c1">700202</span><span class="c2">005393194</span><span class="c3">9</span></div><div class="t4r r1" style="top:184px"><span class="c1">700202</span><span class="c2">041383126</span><span class="c3">9</span></div><div class="t4r r0" style="top:199px"><span class="c1">700203</span><span class="c2">005185574</span><span class="c3">11</span></div><div class="t4r r1" style="top:214px"><span class="c1">700203</span><span class="c2">050348952</span><span class="c3">11</span></div><div class="t4r r0" style="top:229px"><span class="c1">700204</span><span class="c2">053581849</span><span class="c3">13</span></div><div class="t4r r1" style="top:244px"><span class="c1">700205</span><span class="c2">011134384</span><span class="c3">14</span></div><div class="t4r r0" style="top:259px"><span class="c1">700205</span><span class="c2">069002426</span><span class="c3">14</span></div><div class="t4r r1" style="top:274px"><span class="c1">700206</span><span class="c2">011134384</span><span class="c3">16</span></div><div class="t4r r0" style="top:289px"><span class="c1">700206</span><span class="c2">069002426</span><span class="c3">16</span></div><div class="t4r r1" style="top:304px"><span class="c1">700207</span><span class="c2">065248015</span><span class="c3">18</span></div><div class="t4r r0" style="top:319px"><span class="c1">700208</span><span class="c2">009805995</span><span class="c3">19</span></div><div class="t4r r1" style="top:334px"><span class="c1">700208</span><span class="c2">043594449</span><span class="c3">19</span></div><div class="t4r r0" style="top:349px"><span class="c1">700209</span><span class="c2">041383126</span><span class="c3">21</span></div><div class="t4r r1" style="top:364px"><span class="c1">700209</span><span class="c2">064439243</span><span class="c3">21</span></div><div class="t4r r0" style="top:379px"><span class="c1">700210</span><span class="c2">009805995</span><span class="c3">23</span></div><div class="t4r r1" style="top:394px"><span class="c1">700210</span><span class="c2">043594449</span><span class="c3">23</span></div><div class="t4r r0" style="top:409px"><span class="c1">700210</span><span class="c2">056023575</span><span class="c3">23</span></div><div class="t4r r1" style="top:424px"><span class="c1">700211</span><span class="c2">041383126</span><span class="c3">26</span></div><div class="t4r r0" style="top:439px"><span class="c1">700212</span><span class="c2">009805995</span><span class="c3">27</span></div><div class="t4r r1" style="top:454px"><span class="c1">700213</span><span class="c2">041383126</span><span class="c3">28</span></div><div class="t4r r0" style="top:469px"><span class="c1">700213</span><span class="c2">064439243</span><span class="c3">28</span></div><div class="t4r r1" style="top:484px"><span class="c1">700214</span><span class="c2">041383126</span><span class="c3">30</span></div><div class="t4r r0" style="top:499px"><span class="c1">700215</span><span class="c2">041383126</span><span class="c3">31</span></div><div class="t4r r1" style="top:514px"><span class="c1">700216</span><span class="c2">041383126</span><span class="c3">32</span></div><div class="t4r r0" style="top:529px"><span class="c1">700216</span><span class="c2">064439243</span><span class="c3">32</span></div><div class="t4r r1" style="top:544px"><span class="c1">700217</span><span class="c2">041383126</span><span class="c3">34</span></div><div class="t4r r0" style="top:559px"><span class="c1">700217</span><span class="c2">064439243</span><span class="c3">34</span></div></div>
<div id="status" class="abs"><div class="txt">Pulse F1 para ver la Ayuda</div>
<div class="pane" style="left:1403px;width:116px"><span>04/01/2015 11:44:33*</span></div>
<div class="pane" style="left:1521px;width:9px"></div>
<div class="pane" style="left:1531px;width:40px"><span>35 X 3</span></div>
<div class="pane" style="left:1572px;width:8px"></div>
<div class="pane" style="left:1582px;width:8px"></div>
<div class="pane" style="left:1592px;width:8px"></div>
</div>
<div id="taskbar" class="abs">
<svg style="position:absolute;left:8px;top:0px" width="38" height="38" viewBox="0 0 38 38"><defs><radialGradient id="orb" cx=".5" cy=".95" r=".75"><stop offset="0" stop-color="#10e0ff"/><stop offset=".35" stop-color="#0a80c8"/><stop offset=".7" stop-color="#0a4a90"/><stop offset="1" stop-color="#083a78"/></radialGradient><linearGradient id="orbh" x1="0" y1="0" x2="0" y2="1"><stop offset="0" stop-color="#e8f0f6"/><stop offset="1" stop-color="#5a80a8"/></linearGradient></defs><circle cx="19" cy="19" r="18" fill="url(#orb)" stroke="#a89c90" stroke-width=".8"/><path d="M2.5 18.5A16.5 16.5 0 0 1 35.5 18.5Q19 17 2.5 18.5z" fill="url(#orbh)" opacity=".9"/><g stroke="#0a3a6a" stroke-width=".6"><path d="M10 9.5q4-2 9.5-0.5l-2.5 9q-5-1.5-9.5 0.5z" fill="#f06a10"/><path d="M20.5 9.5q5 2 10-0.5l-2.5 9.5q-5 2.5-10 0z" fill="#8cc840"/><path d="M7.5 19q5-2 9.5-0.5l-2.5 9q-5-1.5-9.5 0.5z" fill="#2a9ae0"/><path d="M18 19q5 2 10-0.5l-2.5 10q-5 2.5-10 0z" fill="#f8c020"/></g></svg>
<div class="tbtn" style="left:60px;width:58px"></div>
<div class="tbtn" style="left:121px;width:59px"></div>
<div class="tbtn" style="left:184px;width:58px"></div>
<div class="tbtn" style="left:246px;width:58px"></div>
<div class="tbtn act" style="left:370px;width:58px"></div>
<div class="tbtn" style="left:432px;width:58px"></div>
<div class="tbtn" style="left:494px;width:58px"></div>
<div class="tbtn" style="left:556px;width:51px"></div>
<div style="position:absolute;left:608px;top:1px;width:6px;height:39px;border-left:1px solid #3a3a3a;border-right:1px solid #3a3a3a;background:#b8b8b8"></div>
<!-- outlook -->
<svg style="position:absolute;left:73px;top:3px" width="33" height="33" viewBox="0 0 33 33"><rect x="1" y="1" width="28" height="28" fill="#f8d050" stroke="#e0a020"/><rect x="3" y="3" width="24" height="24" fill="#fbe9a0"/><ellipse cx="10" cy="13" rx="5.5" ry="7.5" fill="none" stroke="#e88a10" stroke-width="4"/><circle cx="24" cy="14" r="5" fill="#fff4d0" stroke="#e8a030"/><rect x="17" y="20" width="15" height="12" fill="#fbe9a0" stroke="#d0a030"/><path d="M17 20l7.5 6 7.5-6" fill="none" stroke="#d0a030"/></svg>
<!-- thunderbird -->
<svg style="position:absolute;left:135px;top:2px" width="34" height="34" viewBox="0 0 34 34"><defs><radialGradient id="tbg" cx=".45" cy=".4" r=".6"><stop offset="0" stop-color="#6ab4f4"/><stop offset=".7" stop-color="#2a70d0"/><stop offset="1" stop-color="#184a98"/></radialGradient></defs><circle cx="18" cy="17" r="14.5" fill="url(#tbg)"/><path d="M6 6q5-5 12-3-5 1-7 5z" fill="#1a4aa0"/><circle cx="10" cy="9" r="1" fill="#f0c030"/><path d="M3 15l10-4 13 7-5 11H8z" fill="#f4f0ea" stroke="#9a9080" stroke-width=".8"/><path d="M3 15l10 8 13-5" fill="none" stroke="#9a9080" stroke-width=".8"/></svg>
<!-- postbox -->
<svg style="position:absolute;left:198px;top:2px" width="30" height="34" viewBox="0 0 30 34"><defs><linearGradient id="pbg" x1="0" y1="0" x2="1" y2="0"><stop offset="0" stop-color="#8a8a8a"/><stop offset=".4" stop-color="#e0e0e0"/><stop offset=".7" stop-color="#c0c0c0"/><stop offset="1" stop-color="#7a7a7a"/></linearGradient></defs><path d="M4 30V9q0-6 6-6h10q6 0 6 6v21z" fill="url(#pbg)" stroke="#5a5a5a" stroke-width=".8"/><path d="M5 8q0-4 4-4h5v5H5z" fill="#1a2a5a"/><path d="M7 6h6" stroke="#4a8ae8" stroke-width="1.5"/><rect x="7" y="13" width="6" height="3" fill="#f0f0f0" stroke="#c03030" stroke-width=".6"/><path d="M4 20h22" stroke="#8a8a8a" stroke-width=".6"/><path d="M6 30v3M24 30v3" stroke="#5a5a5a" stroke-width="2"/></svg>
<!-- chrome -->
<svg style="position:absolute;left:259px;top:2px" width="32" height="32" viewBox="0 0 32 32"><circle cx="16" cy="16" r="14" fill="#e03a2a"/><path d="M16 16L4 9A14 14 0 0 0 10 28.6z" fill="#30a040"/><path d="M16 16L10 28.6A14 14 0 0 0 30 16z" fill="#f8c818"/><path d="M16 16L28 9A14 14 0 0 1 30 16z" fill="#f8c818"/><circle cx="16" cy="16" r="6.5" fill="#fff"/><circle cx="16" cy="16" r="5" fill="#3a80e0"/></svg>
<!-- firefox -->
<svg style="position:absolute;left:320px;top:2px" width="34" height="34" viewBox="0 0 34 34"><defs><radialGradient id="ffg" cx=".6" cy=".4" r=".5"><stop offset="0" stop-color="#5ac0f8"/><stop offset=".6" stop-color="#2a78d8"/><stop offset="1" stop-color="#1a3a98"/></radialGradient><linearGradient id="ffo" x1="0" y1="0" x2="0" y2="1"><stop offset="0" stop-color="#f8a020"/><stop offset=".5" stop-color="#f07020"/><stop offset="1" stop-color="#d84010"/></linearGradient></defs><circle cx="20" cy="14" r="11" fill="url(#ffg)"/><path d="M5 9q-3 8 0 15 5 9 15 9 9 0 13-8 2-5 0-10-1 7-7 10-7 4-13 0-4-3-3-8 1-3 4-4-2-3-4-2 1-4 4-6-5 1-7 5-1-3 0-6-3 2-2 5z" fill="url(#ffo)"/><path d="M25 3q6 3 8 11-3-5-7-6z" fill="#f8c030"/></svg>
<!-- qlikview -->
<svg style="position:absolute;left:383px;top:3px" width="33" height="33" viewBox="0 0 33 33"><circle cx="16.5" cy="16.5" r="15" fill="#e0e0e0" opacity=".8"/><circle cx="16" cy="16" r="10" fill="none" stroke="#28a028" stroke-width="4.5"/><circle cx="16" cy="16" r="5" fill="#333"/><path d="M22 22l6 5" stroke="#28a028" stroke-width="4.5"/></svg>
<!-- skype -->
<svg style="position:absolute;left:445px;top:3px" width="33" height="33" viewBox="0 0 33 33"><circle cx="16.5" cy="16.5" r="13" fill="#1aa0e8"/><circle cx="8" cy="8" r="6" fill="#1aa0e8"/><circle cx="25" cy="25" r="6" fill="#1aa0e8"/><text x="16.5" y="24.5" font-family="Liberation Sans" font-weight="bold" font-size="23" fill="#fff" text-anchor="middle">S</text></svg>
<!-- itunes -->
<svg style="position:absolute;left:507px;top:4px" width="32" height="32" viewBox="0 0 32 32"><circle cx="16" cy="16" r="14" fill="#e8203a" stroke="#f0f0f0" stroke-width="1.5"/><path d="M12 9l10-2v13" stroke="#fff" stroke-width="2.2" fill="none"/><path d="M12 9v13" stroke="#fff" stroke-width="2.2"/><circle cx="10" cy="22" r="3" fill="#fff"/><circle cx="20" cy="20" r="3" fill="#fff"/></svg>
<!-- explorer -->
<svg style="position:absolute;left:566px;top:3px" width="33" height="33" viewBox="0 0 33 33"><path d="M2 5h10l2 3h17v22H2z" fill="#f0d880" stroke="#c8a840"/><rect x="5" y="3" width="6" height="4" fill="#40b040"/><rect x="13" y="5" width="5" height="4" fill="#d03030"/><rect x="20" y="6" width="5" height="4" fill="#3a7ad0"/><path d="M2 11h29v19H2z" fill="#f8e8a8" stroke="#c8a840"/><path d="M7 30v-9h19v9h-4v-5h-11v5z" fill="#6ab0e8" stroke="#3a7ab8"/></svg>
<!-- tray -->
<div class="tray" style="left:932px;width:62px"></div>
<div class="tray" style="left:994px;width:95px;border-right:1px solid #2e2e2e"></div>
<div class="tray" style="left:1251px;width:99px"></div>
<svg style="position:absolute;left:947px;top:4px" width="32" height="32" viewBox="0 0 32 32"><defs><radialGradient id="redb" cx=".4" cy=".35" r=".7"><stop offset="0" stop-color="#ff7070"/><stop offset=".6" stop-color="#d81a2a"/><stop offset="1" stop-color="#900a10"/></radialGradient></defs><circle cx="16" cy="16" r="15" fill="url(#redb)"/><g stroke="#fff" stroke-width="2.2" fill="none"><path d="M9 9l4 4M23 9l-4 4M9 23l4-4M23 23l-4-4M13 7v5M19 7v5M7 13h5M25 13h-5M7 19h5M25 19h-5M13 25v-5M19 25v-5"/></g><circle cx="16" cy="16" r="1.8" fill="#fff"/></svg>
<svg style="position:absolute;left:998px;top:11px" width="46" height="20" viewBox="0 0 46 20"><path d="M1 19V14h8V11h8V7h8V4h8V1h10v18z" fill="#1a8a2a" stroke="#fff" stroke-width="1"/><path d="M9 14v5M17 11v8M25 7v12M33 4v15" stroke="#0a3a0a" stroke-width="1"/><path d="M1 19h44" stroke="#000"/></svg>
<svg style="position:absolute;left:1055px;top:12px" width="16" height="18" viewBox="0 0 16 18"><path d="M8 6l-3 11h6z" fill="#fff"/><circle cx="8" cy="5" r="1.5" fill="#fff"/><path d="M4.5 2q-2 3 0 6M11.5 2q2 3 0 6M2.5 0.5q-3 4.5 0 9M13.5 0.5q3 4.5 0 9" stroke="#fff" stroke-width="1" fill="none"/></svg>
<div style="position:absolute;left:1225px;top:10px;font-size:12px;color:#fff;line-height:14px">ES</div>
<svg style="position:absolute;left:1265px;top:9px" width="48" height="21" viewBox="0 0 48 21"><rect x="0.5" y="0.5" width="42" height="20" fill="#fff"/><rect x="2" y="2" width="39" height="17" fill="#1a8a3a" stroke="#000" stroke-width=".8"/><rect x="42" y="6" width="4" height="9" fill="#000"/><text x="21.5" y="14.5" font-family="Liberation Sans" font-size="12.5" fill="#fff" text-anchor="middle" textLength="31" lengthAdjust="spacingAndGlyphs">100%</text></svg>
<svg style="position:absolute;left:1320px;top:11px" width="18" height="16" viewBox="0 0 18 16"><path d="M9 2q-7 0-7 6t7 6h3V2z" fill="#000" stroke="#fff" stroke-width="1.5"/><path d="M12 5h5M12 11h5" stroke="#fff" stroke-width="3"/><path d="M12 5h4M12 11h4" stroke="#000" stroke-width="1.6"/></svg>
<svg style="position:absolute;left:1355px;top:18px" width="10" height="6" viewBox="0 0 10 6"><path d="M1 5.5L5 1l4 4.5z" fill="#e8eef8" stroke="#8a9ab0" stroke-width=".6"/></svg>
<svg style="position:absolute;left:1376px;top:13px" width="17" height="17" viewBox="0 0 17 17"><path d="M2 1v16" stroke="#fff" stroke-width="1.8"/><path d="M3 2h6l2 2h5l-2 4h-5l-2-2H3z" fill="#fff" stroke="#444" stroke-width=".5"/></svg>
<svg style="position:absolute;left:1400px;top:15px" width="17" height="13" viewBox="0 0 17 13"><path d="M1 10h3v3H1zM5 7h3v6H5zM9 4h3v9H9zM13 1h3v12h-3z" fill="#fff" stroke="#333" stroke-width=".5"/></svg>
<svg style="position:absolute;left:1425px;top:13px" width="15" height="17" viewBox="0 0 15 17"><path d="M1.5 3.5h8v12h-8z" fill="none" stroke="#fff" stroke-width="1.5"/><path d="M3.5 1.5h8v12" fill="none" stroke="#fff" stroke-width="1.5"/><path d="M8 6h6v4l-3 2-3-2z" fill="#fff" stroke="#333" stroke-width=".5"/><path d="M10 2v4M13 2v4M11 12v5" stroke="#fff" stroke-width="1.5"/></svg>
<svg style="position:absolute;left:1448px;top:13px" width="18" height="17" viewBox="0 0 18 17"><path d="M1 5h4l5-4v15l-5-4H1z" fill="#e8e8e8" stroke="#555" stroke-width=".7"/><circle cx="12.5" cy="11.5" r="4.5" fill="#e02020" stroke="#fff" stroke-width="1"/><path d="M10.5 9.5l4 4M14.5 9.5l-4 4" stroke="#fff" stroke-width="1.4"/></svg>
<svg style="position:absolute;left:1473px;top:15px" width="17" height="15" viewBox="0 0 17 15"><path d="M5.5 0h6l5.5 9.5h-6z" fill="#f8c820"/><path d="M5.5 0L0 9.5l3 5L8.5 5z" fill="#1a9a4a"/><path d="M3 14.5h11l3-5H6z" fill="#3a7af0"/></svg>
<div style="position:absolute;left:1521px;top:6px;font-size:12px;color:#fff;line-height:14px;letter-spacing:.2px">11:49</div>
<div style="position:absolute;left:1507px;top:22px;font-size:12px;color:#fff;line-height:14px;letter-spacing:-.3px">04/01/2015</div>
<div style="position:absolute;left:1578px;top:1px;width:22px;height:39px;border:1px solid #3a3a3a;border-right:none;background:linear-gradient(160deg,#a8a8a8,#7e7e7e 50%,#8e8e8e)"></div>
</div>


</body></html>
